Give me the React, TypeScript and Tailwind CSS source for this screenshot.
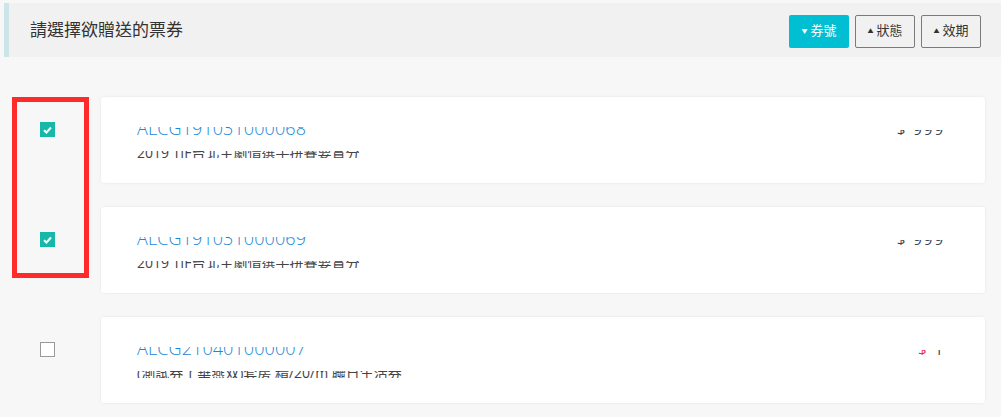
const tickets = [
  {
    code: 'ALCG191031000068',
    name: '2019 TIF台北主劇情選手拼賽要賞分',
    price: '999',
    checked: true,
    red: false,
  },
  {
    code: 'ALCG191031000069',
    name: '2019 TIF台北主劇情選手拼賽要賞分',
    price: '999',
    checked: true,
    red: false,
  },
  {
    code: 'ALCG210401000007',
    name: '(測試券了華燕双)套房 精/20/m 聯日生活券',
    price: '1',
    checked: false,
    red: true,
  },
];

function SortButton({ label, active, down }: { label: string; active?: boolean; down?: boolean }) {
  return (
    <button
      className={
        active
          ? 'h-[33px] w-[60px] rounded-[2px] bg-[#00bfd2] text-white text-[13px] flex items-center justify-center gap-[3px]'
          : 'h-[33px] w-[60px] rounded-[2px] border border-[#7a7a7a] bg-[#f1f1f1] text-[#333] text-[13px] flex items-center justify-center gap-[3px]'
      }
    >
      <span className="text-[6px] leading-none">{down ? '▼' : '▲'}</span>
      {label}
    </button>
  );
}

function CheckBox({ checked }: { checked: boolean }) {
  if (!checked) {
    return <div className="w-[15px] h-[15px] border border-[#9a9a9a] bg-white" />;
  }
  return (
    <div className="w-[15px] h-[15px] bg-[#16b9a8] flex items-center justify-center">
      <svg width="9" height="8" viewBox="0 0 9 8">
        <path d="M1 4.2 L3.4 6.5 L8 1.5" stroke="white" strokeWidth="2" fill="none" />
      </svg>
    </div>
  );
}

export default function App() {
  return (
    <div
      className="min-h-[417px] bg-[#f7f7f7] pt-[3px] relative"
      style={{ fontFamily: '"Open Sans", "Noto Sans CJK TC", sans-serif' }}
    >
      <div className="ml-[4px] h-[54px] bg-[#f1f1f1] border-l-[5px] border-[#cde5e9] flex items-center justify-between pl-[21px] pr-[20px]">
        <h1 className="text-[17px] text-[#333] font-normal">請選擇欲贈送的票券</h1>
        <div className="flex gap-[6px] pt-[2px]">
          <SortButton label="券號" active down />
          <SortButton label="狀態" />
          <SortButton label="效期" />
        </div>
      </div>

      <div className="pt-[40px] pr-[16px] flex flex-col gap-[24px]">
        {tickets.map((t) => (
          <div key={t.code} className="flex">
            <div className="w-[101px] shrink-0 pl-[40px] pt-[25px]">
              <CheckBox checked={t.checked} />
            </div>
            <div className="flex-1 h-[86px] bg-white rounded-[3px] shadow-[0_0_3px_rgba(0,0,0,0.08)] pl-[36px] pr-[40px] pt-[26px] flex justify-between">
              <div>
                <div className="h-[8px] overflow-hidden mt-[4px]">
                  <div className="-mt-[10px] text-[18px] leading-[22px] font-light text-[#1a88d8] tracking-[0.1px]">
                    {t.code}
                  </div>
                </div>
                <div className="h-[7px] overflow-hidden mt-[16px]">
                  <div className="-mt-[7px] text-[14px] leading-[18px] text-[#444]">{t.name}</div>
                </div>
              </div>
              <div className="h-[5px] overflow-hidden mt-[7px]">
                <div className="-mt-[11px] text-[15px] leading-[20px] text-[#3a4656] tracking-[2px]">
                  <span className={t.red ? 'text-[#e0334a]' : ''}>$</span> {t.price}
                </div>
              </div>
            </div>
          </div>
        ))}
      </div>

      <div className="absolute left-[12px] top-[97px] w-[77px] h-[181px] border-[5px] border-[#ff2b2b]" />
    </div>
  );
}
